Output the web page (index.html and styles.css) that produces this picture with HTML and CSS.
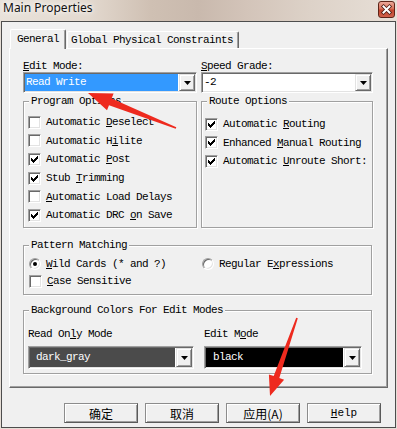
FILE: index.html
```html
<!DOCTYPE html>
<html lang="en">
<head>
  <meta charset="UTF-8">
  <meta name="viewport" content="width=device-width, initial-scale=1.0">
  <title>Main Properties</title>
  <link rel="stylesheet" href="styles.css">
</head>
<body>
  <div class="window">
    <div class="titlebar">
      <span class="title">Main Properties</span>
      <span class="close">
        <svg width="15" height="15" viewBox="0 0 15 15">
          <path d="M4.5 4.5 L10.5 10.5 M10.5 4.5 L4.5 10.5" stroke="#4a1a10" stroke-width="3.6" stroke-linecap="square"/>
          <path d="M4.5 4.5 L10.5 10.5 M10.5 4.5 L4.5 10.5" stroke="#fff" stroke-width="2" stroke-linecap="square"/>
        </svg>
      </span>
    </div>

    <div class="client">
      <div class="tabs">
        <div class="tab active">General</div>
        <div class="tab">Global Physical Constraints</div>
      </div>

      <div class="panel">
        <div class="cols">
          <div class="field">
            <label class="label"><u>E</u>dit Mode:</label>
            <div class="combo">
              <span class="value selected">Read Write</span>
              <span class="drop"><svg width="7" height="4" viewBox="0 0 7 4"><polygon points="0,0 7,0 3.5,4"/></svg></span>
            </div>
          </div>
          <div class="field">
            <label class="label"><u>S</u>peed Grade:</label>
            <div class="combo">
              <span class="value">-2</span>
              <span class="drop"><svg width="7" height="4" viewBox="0 0 7 4"><polygon points="0,0 7,0 3.5,4"/></svg></span>
            </div>
          </div>
        </div>

        <div class="cols groups-top">
          <div class="group program">
            <span class="group-title">Program Options</span>
            <div class="check"><span class="box"></span><span>Automatic <u>D</u>eselect</span></div>
            <div class="check"><span class="box"></span><span>Automatic H<u>i</u>lite</span></div>
            <div class="check"><span class="box on"><svg width="7" height="7" viewBox="0 0 7 7"><polygon points="0,2 1,2 1,3 2,3 2,4 3,4 3,3 4,3 4,2 5,2 5,1 6,1 6,0 7,0 7,3 6,3 6,4 5,4 5,5 4,5 4,6 3,6 3,7 2,7 2,6 1,6 1,5 0,5"/></svg></span><span>Automatic <u>P</u>ost</span></div>
            <div class="check"><span class="box on"><svg width="7" height="7" viewBox="0 0 7 7"><polygon points="0,2 1,2 1,3 2,3 2,4 3,4 3,3 4,3 4,2 5,2 5,1 6,1 6,0 7,0 7,3 6,3 6,4 5,4 5,5 4,5 4,6 3,6 3,7 2,7 2,6 1,6 1,5 0,5"/></svg></span><span>Stub <u>T</u>rimming</span></div>
            <div class="check"><span class="box"></span><span><u>A</u>utomatic Load Delays</span></div>
            <div class="check"><span class="box on"><svg width="7" height="7" viewBox="0 0 7 7"><polygon points="0,2 1,2 1,3 2,3 2,4 3,4 3,3 4,3 4,2 5,2 5,1 6,1 6,0 7,0 7,3 6,3 6,4 5,4 5,5 4,5 4,6 3,6 3,7 2,7 2,6 1,6 1,5 0,5"/></svg></span><span>Automatic DRC <u>o</u>n Save</span></div>
          </div>
          <div class="group route">
            <span class="group-title">Route Options</span>
            <div class="check"><span class="box on"><svg width="7" height="7" viewBox="0 0 7 7"><polygon points="0,2 1,2 1,3 2,3 2,4 3,4 3,3 4,3 4,2 5,2 5,1 6,1 6,0 7,0 7,3 6,3 6,4 5,4 5,5 4,5 4,6 3,6 3,7 2,7 2,6 1,6 1,5 0,5"/></svg></span><span>Automatic <u>R</u>outing</span></div>
            <div class="check"><span class="box on"><svg width="7" height="7" viewBox="0 0 7 7"><polygon points="0,2 1,2 1,3 2,3 2,4 3,4 3,3 4,3 4,2 5,2 5,1 6,1 6,0 7,0 7,3 6,3 6,4 5,4 5,5 4,5 4,6 3,6 3,7 2,7 2,6 1,6 1,5 0,5"/></svg></span><span>Enhanced <u>M</u>anual Routing</span></div>
            <div class="check"><span class="box on"><svg width="7" height="7" viewBox="0 0 7 7"><polygon points="0,2 1,2 1,3 2,3 2,4 3,4 3,3 4,3 4,2 5,2 5,1 6,1 6,0 7,0 7,3 6,3 6,4 5,4 5,5 4,5 4,6 3,6 3,7 2,7 2,6 1,6 1,5 0,5"/></svg></span><span>Automatic <u>U</u>nroute Short:</span></div>
          </div>
        </div>

        <div class="group pattern">
          <span class="group-title">Pattern Matching</span>
          <div class="radio-row">
            <div class="check"><span class="radio on"></span><span><u>W</u>ild Cards (* and ?)</span></div>
            <div class="check"><span class="radio"></span><span>Regular E<u>x</u>pressions</span></div>
          </div>
          <div class="check"><span class="box"></span><span><u>C</u>ase Sensitive</span></div>
        </div>

        <div class="group colors">
          <span class="group-title">Background Colors For Edit Modes</span>
          <div class="color-cols">
            <div class="field">
              <label class="label">Read On<u>l</u>y Mode</label>
              <div class="combo tall ro">
                <span class="value swatch dark">dark_gray</span>
                <span class="drop"><svg width="7" height="4" viewBox="0 0 7 4"><polygon points="0,0 7,0 3.5,4"/></svg></span>
              </div>
            </div>
            <div class="field">
              <label class="label">Edit M<u>o</u>de</label>
              <div class="combo tall ed">
                <span class="value swatch black">black</span>
                <span class="drop"><svg width="7" height="4" viewBox="0 0 7 4"><polygon points="0,0 7,0 3.5,4"/></svg></span>
              </div>
            </div>
          </div>
        </div>
      </div>

      <div class="buttons">
        <button class="btn cjk">确定</button>
        <button class="btn cjk">取消</button>
        <button class="btn cjk">应用(A)</button>
        <button class="btn"><u>H</u>elp</button>
      </div>
    </div>

    <svg class="arrows" width="397" height="429" viewBox="0 0 397 429">
      <polygon points="88,93 113.6,93.5 111.6,98.6 176.3,127.3 175.7,128.7 109,105.2 107,110.3" fill="#ee2a1e"/>
      <polygon points="270,396 284.1,379.7 279.3,378.1 297.8,318.3 296.2,317.7 273.7,376.1 268.9,374.5" fill="#ee2a1e"/>
    </svg>
  </div>
</body>
</html>
```

FILE: styles.css
```css
* {
  box-sizing: border-box;
}

body {
  margin: 0;
  background: #e6ded6;
  font-family: "Liberation Mono", "DejaVu Sans Mono", monospace;
  font-size: 11px;
  letter-spacing: -0.6px;
  color: #000;
}

u {
  text-decoration: underline;
}

.window {
  position: relative;
  width: 397px;
  height: 429px;
}

/* title bar */
.titlebar {
  height: 21px;
  display: flex;
  align-items: flex-start;
  background: linear-gradient(90deg, #e9e2da 0%, #e3d9cf 22%, #cfc0b3 38%, #c9b9ad 50%, #d3c4b9 62%, #ddd2c8 78%, #e7dfd7 100%);
}

.title {
  font-family: "Noto Sans", sans-serif;
  font-size: 12px;
  letter-spacing: 0;
  line-height: 16px;
  padding-left: 3px;
  color: #111;
  text-shadow: 0 0 4px #fff, 0 0 8px #fff;
}

.close {
  margin: 1px 2px 0 auto;
  width: 17px;
  height: 17px;
  border: 1px solid #5e2418;
  border-radius: 3px;
  background: linear-gradient(#eba999 0%, #d86c55 48%, #c2442c 52%, #d0604a 100%);
  display: flex;
  align-items: center;
  justify-content: center;
}

/* client area */
.client {
  margin-left: 1px;
  width: 395px;
  height: 407px;
  border: 1px solid #4d4d4d;
  background: #f0f0f0;
}

.tabs {
  display: flex;
  align-items: flex-end;
  height: 26px;
  padding-left: 8px;
}

.tab {
  height: 17px;
  line-height: 16px;
  padding: 0 5px 0 3px;
  border: 1px solid;
  border-bottom: 0;
  border-color: #fff #696969 #fff #fff;
  box-shadow: inset -1px 0 #a0a0a0;
  border-radius: 2px 2px 0 0;
  margin-left: 1px;
  white-space: nowrap;
}

.tab.active {
  position: relative;
  z-index: 1;
  height: 20px;
  line-height: 18px;
  margin: 0 0 -1px 0;
  padding: 0 6px;
  background: #f0f0f0;
}

.panel {
  margin-left: 7px;
  width: 379px;
  height: 340px;
  border: 1px solid;
  border-color: #fff #696969 #696969 #fff;
  box-shadow: inset -1px -1px #a0a0a0;
  padding: 11px 0 0 13px;
}

.cols {
  display: grid;
  grid-template-columns: 174px 172px;
  column-gap: 4px;
}

.label {
  display: block;
  line-height: 12px;
  white-space: nowrap;
}

/* combo boxes */
.combo {
  display: flex;
  height: 21px;
  padding: 1px;
  border: 1px solid;
  border-color: #a0a0a0 #fff #fff #a0a0a0;
  box-shadow: inset 1px 1px #696969, inset -1px -1px #e3e3e3;
  background: #fff;
}

.value {
  flex: 1;
  margin-right: 1px;
  padding-left: 1px;
  line-height: 17px;
  white-space: nowrap;
}

.value.selected {
  background: #3399ff;
  color: #fff;
}

.drop {
  width: 16px;
  flex: none;
  background: #f0f0f0;
  border: 1px solid;
  border-color: #e3e3e3 #696969 #696969 #e3e3e3;
  box-shadow: inset 1px 1px #fff, inset -1px -1px #a0a0a0;
  display: flex;
  align-items: center;
  justify-content: center;
}

.drop svg {
  display: block;
}

/* group boxes */
.group {
  position: relative;
  border: 1px solid #a0a0a0;
  box-shadow: inset 1px 1px #fff, 1px 1px #fff;
}

.group-title {
  position: absolute;
  top: -7px;
  left: 5px;
  padding: 0 2px;
  line-height: 12px;
  background: #f0f0f0;
  white-space: nowrap;
}

.groups-top {
  margin-top: 8px;
}

.program {
  height: 127px;
  padding: 11px 0 0 4px;
}

.route {
  height: 127px;
  padding: 13px 0 0 3px;
}

.route .check {
  height: 18.5px;
}

.check {
  display: flex;
  align-items: center;
  gap: 5px;
  height: 18.6px;
  white-space: nowrap;
}

.box {
  width: 13px;
  height: 13px;
  flex: none;
  background: #fff;
  border: 1px solid;
  border-color: #a0a0a0 #fff #fff #a0a0a0;
  box-shadow: inset 1px 1px #696969, inset -1px -1px #e3e3e3;
  display: flex;
  align-items: center;
  justify-content: center;
}

.box svg {
  display: block;
  shape-rendering: crispEdges;
}

.radio {
  width: 12px;
  height: 12px;
  flex: none;
  border-radius: 50%;
  background: #fff;
  border: 1px solid;
  border-color: #a0a0a0 #fff #fff #a0a0a0;
  box-shadow: inset 1px 1px #696969, inset -1px -1px #e3e3e3;
  display: flex;
  align-items: center;
  justify-content: center;
}

.radio.on::after {
  content: "";
  width: 4px;
  height: 4px;
  border-radius: 50%;
  background: #000;
}

.pattern {
  width: 349px;
  height: 50px;
  margin-top: 17px;
  padding: 9px 0 0 5px;
}

.pattern .check {
  height: 17.5px;
}

.radio-row {
  display: grid;
  grid-template-columns: 173px auto;
}

.colors {
  width: 349px;
  height: 64px;
  margin-top: 15px;
  padding: 17px 0 0 4px;
}

.color-cols {
  display: grid;
  grid-template-columns: 176px auto;
}

.combo.tall {
  height: 23px;
  margin-top: 6px;
}

.combo.ro {
  width: 166px;
}

.combo.ed {
  width: 158px;
}

.swatch {
  color: #fff;
  line-height: 19px;
  padding-left: 6px;
}

.swatch.dark {
  background: #4b4b4b;
}

.swatch.black {
  background: #000;
  padding-left: 7px;
}

/* dialog buttons */
.buttons {
  display: flex;
  justify-content: flex-end;
  gap: 7px;
  margin-top: 15px;
  padding-right: 14px;
}

.btn {
  width: 74px;
  height: 20px;
  padding: 0;
  font: inherit;
  color: #000;
  background: #f0f0f0;
  border: 1px solid;
  border-color: #8c8c8c #5a5a5a #5a5a5a #8c8c8c;
  box-shadow: inset 1px 1px #fff, inset -1px -1px #a0a0a0;
  line-height: 17px;
}

.btn.cjk {
  font-family: "Noto Sans CJK SC", sans-serif;
  font-size: 12px;
  letter-spacing: 0;
}

.arrows {
  position: absolute;
  left: 0;
  top: 0;
  pointer-events: none;
}
```
